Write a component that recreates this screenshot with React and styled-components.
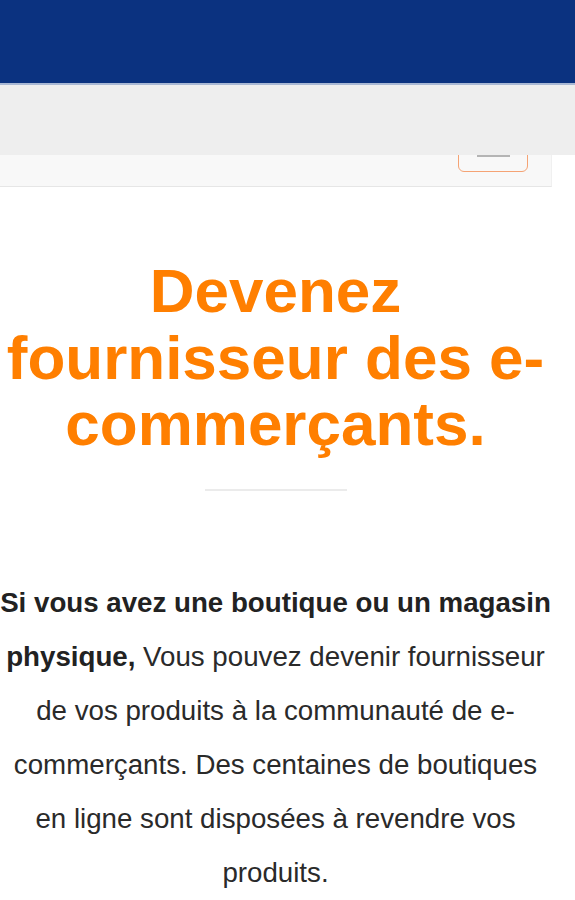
import styled, {createGlobalStyle} from "styled-components";

const GlobalStyle = createGlobalStyle`
    html, body {
        margin: 0;
        padding: 0;
        background: #ffffff;
        font-family: "Liberation Sans", Arial, sans-serif;
    }
`;

const App = () => {
    return (
        <StyledPage>
            <GlobalStyle/>
            <StyledTopBar/>
            <StyledStickyBar/>
            <StyledNavPanel>
                <StyledToggler aria-label="menu">
                    <StyledTogglerBar/>
                </StyledToggler>
            </StyledNavPanel>
            <StyledMain>
                <StyledTitle>
                    Devenez fournisseur des e-commerçants.
                </StyledTitle>
                <StyledDivider/>
                <StyledText>
                    <strong>Si vous avez une boutique ou un magasin physique,</strong> Vous pouvez devenir
                    fournisseur de vos produits à la communauté de e-commerçants. Des centaines de boutiques
                    en ligne sont disposées à revendre vos produits.
                </StyledText>
            </StyledMain>
        </StyledPage>
    );
}

const StyledPage = styled.div`
    width: 575px;
    min-height: 900px;
    overflow: hidden;
`;

const StyledTopBar = styled.div`
    height: 83px;
    background-color: #0b3280;
    border-bottom: 2px solid #a9b8d4;
`;

const StyledStickyBar = styled.div`
    height: 70px;
    background-color: #eeeeee;
`;

const StyledNavPanel = styled.div`
    box-sizing: border-box;
    width: 552px;
    height: 32px;
    display: flex;
    justify-content: flex-end;
    align-items: flex-end;
    overflow: hidden;
    padding: 0 23px 14px 0;
    background-color: #f8f8f8;
    border-bottom: 1px solid #e6e6e6;
    border-right: 1px solid #f0f0f0;
`;

const StyledToggler = styled.button`
    flex-shrink: 0;
    box-sizing: border-box;
    width: 70px;
    height: 42px;
    display: flex;
    justify-content: center;
    align-items: flex-start;
    padding: 24px 0 0;
    background: transparent;
    border: 1.5px solid #f5a374;
    border-radius: 6px;
`;

const StyledTogglerBar = styled.span`
    display: block;
    width: 33px;
    height: 2px;
    background-color: #b4b4b4;
`;

const StyledMain = styled.main`
    width: 551px;
    text-align: center;
    padding-bottom: 40px;
`;

const StyledTitle = styled.h1`
    margin: 71px 0 0;
    font-size: 62px;
    line-height: 66.5px;
    font-weight: 700;
    color: #ff7f00;
`;

const StyledDivider = styled.div`
    width: 142px;
    height: 2px;
    margin: 31px auto 0;
    background-color: #ebebeb;
`;

const StyledText = styled.p`
    margin: 85px 0 0;
    font-size: 27.7px;
    line-height: 54px;
    color: #2a2a2a;

    strong {
        font-weight: 700;
        color: #222222;
    }
`;

export default App;
